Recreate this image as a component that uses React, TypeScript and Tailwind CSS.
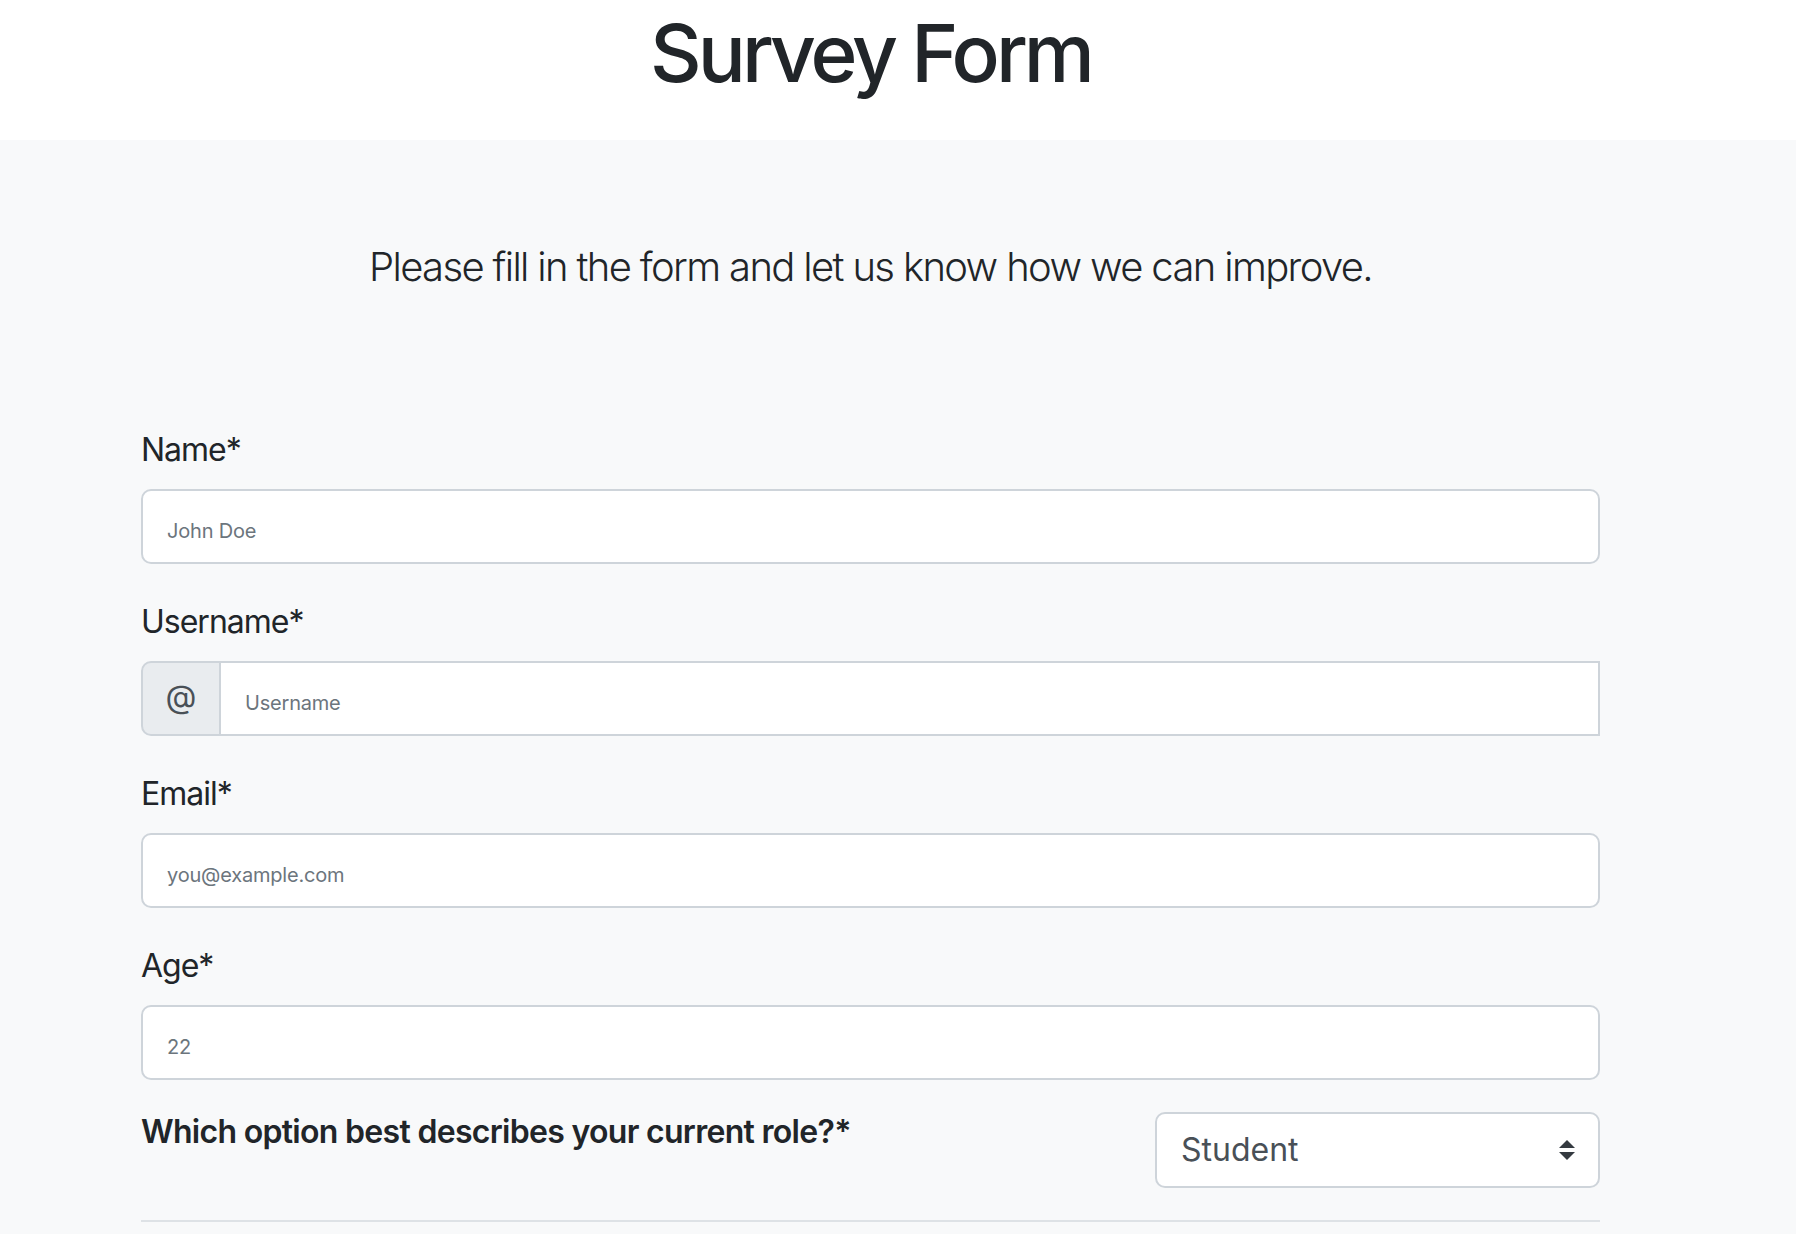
import React from "react";

const inputCls =
  "block w-full h-[75px] bg-white border-2 border-[#ced4da] rounded-[10px] px-[24px] pt-[8px] text-[20px] tracking-[-0.2px] text-[#495057] placeholder:text-[#6c757d] outline-none";

function Field({ label, placeholder, type = "text", mb = "mb-[34px]" }: { label: string; placeholder: string; type?: string; mb?: string }) {
  return (
    <div className={mb}>
      <label className="block text-[32px] leading-[48px] tracking-[-1px] text-[#212529] mb-[15px]">{label}</label>
      <input type={type} placeholder={placeholder} className={inputCls} />
    </div>
  );
}

export default function App() {
  return (
    <div className="min-h-screen bg-[#f8f9fa] font-['Inter','Liberation_Sans',sans-serif] text-[#212529]">
      <header className="bg-white h-[140px]">
        <div className="w-[1741px] text-center">
          <h1 className="text-[80px] leading-[96px] font-medium tracking-[-4px] pt-[5px]">Survey Form</h1>
        </div>
      </header>
      <main className="w-[1741px] px-[141px] pb-[40px]">
        <p className="text-center text-[40px] leading-[60px] font-light tracking-[-1.65px] mt-[97px]">
          Please fill in the form and let us know how we can improve.
        </p>
        <form className="mt-[129px]">
          <Field label="Name*" placeholder="John Doe" />
          <div className="mb-[34px]">
            <label className="block text-[32px] leading-[48px] tracking-[-1px] mb-[15px]">Username*</label>
            <div className="flex h-[75px]">
              <div className="w-[80px] flex items-center justify-center bg-[#e9ecef] border-2 border-[#ced4da] rounded-l-[10px] text-[32px] text-[#495057] pb-[3px]">
                @
              </div>
              <input
                type="text"
                placeholder="Username"
                className="flex-1 -ml-[2px] h-full bg-white border-2 border-[#ced4da] px-[24px] pt-[8px] text-[20px] tracking-[-0.2px] text-[#495057] placeholder:text-[#6c757d] outline-none"
              />
            </div>
          </div>
          <Field label="Email*" placeholder="you@example.com" type="email" />
          <Field label="Age*" placeholder="22" type="number" mb="mb-[28px]" />
          <div className="flex justify-between items-start">
            <label className="text-[32px] leading-[48px] font-semibold tracking-[-0.7px]">
              Which option best describes your current role?*
            </label>
            <div className="relative w-[445px] mt-[4px]">
              <select
                defaultValue="student"
                className="block w-full h-[76px] appearance-none bg-white border-2 border-[#ced4da] rounded-[10px] pl-[24px] pr-[60px] text-[32px] text-[#495057] outline-none"
              >
                <option value="student">Student</option>
                <option value="full">Full Time Job</option>
                <option value="learner">Full Time Learner</option>
                <option value="none">Prefer not to say</option>
                <option value="other">Other</option>
              </select>
              <svg
                className="absolute right-[25px] top-1/2 -translate-y-1/2 pointer-events-none"
                width="16"
                height="20"
                viewBox="0 0 4 5"
              >
                <path fill="#343a40" d="M2 0L0 2h4zm0 5L0 3h4z" />
              </svg>
            </div>
          </div>
          <div className="mt-[32px] h-[2px] bg-[#dee2e6]" />
        </form>
      </main>
    </div>
  );
}
